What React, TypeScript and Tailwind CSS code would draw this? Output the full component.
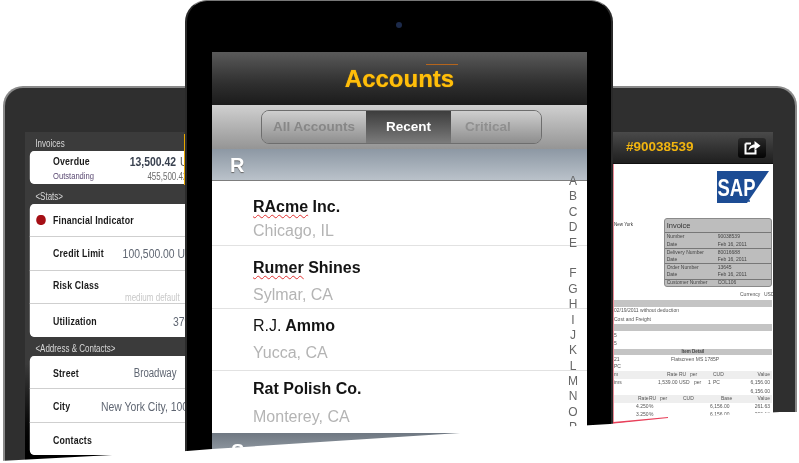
import React from 'react';

const font = "[font-family:'Liberation_Sans',Arial,sans-serif]";

const letters = ['A', 'B', 'C', 'D', 'E', '', 'F', 'G', 'H', 'I', 'J', 'K', 'L', 'M', 'N', 'O', 'P'];

const ShareIcon = () => (
    <svg width="17" height="15" viewBox="0 0 17 15" fill="none">
        <path d="M1.5 3.5H7M11.5 9.5V13.5H1.5V3.5" stroke="#fff" strokeWidth="2" />
        <path d="M4.5 10.5C5 6.5 7.5 4.6 10.5 4.5V1L16.5 5.8L10.5 10V7.5C8 7.5 6 8.5 4.5 10.5Z" fill="#fff" />
    </svg>
);

const SapLogo = () => (
    <svg width="52" height="33" viewBox="0 0 52 33">
        <polygon points="0,0 52,0 30,32 0,32" fill="#1c4c94" />
        <text x="0.5" y="25" fontFamily="Liberation Sans" fontWeight="700" fontSize="24" fill="#fff" textLength="38" lengthAdjust="spacingAndGlyphs">SAP</text>
        <circle cx="32" cy="30" r="1" fill="#1c4c94" />
    </svg>
);

const LeftLabel = ({ children, h }: { children: React.ReactNode; h: string }) => (
    <div className={`${h} pl-[13px] flex items-end text-[10px] leading-[15px] text-[#d8d8d8]`}>{children}</div>
);

const LeftRow = ({ label, value, h, labelW, border = true, pt = 'pt-0', valueClass = 'text-[13px]' }: { label: string; value?: string; h: string; labelW: string; border?: boolean; pt?: string; valueClass?: string }) => (
    <div className={`${h} ${pt} flex items-center whitespace-nowrap ${border ? 'border-b border-[#cfcfcf]' : ''}`}>
        <span className="w-[29px] shrink-0" />
        <span className={`${labelW} shrink-0 text-[11px] font-bold text-[#1a1a1a] tracking-[0.2px]`}>{label}</span>
        {value && <span className={`text-[#5f6672] ${valueClass}`}>{value}</span>}
    </div>
);

// the left tablet is seen at an angle, so its screen is squeezed sideways
const LeftTablet = () => (
    <div className="absolute left-[3px] top-[86px] w-[190px] h-[377px] rounded-tl-[20px] border-l-2 border-t-2 border-[#8a8a8a] bg-[#2f2f2f] pl-[20px] pt-[44px]">
        <div className="w-[160px] h-[331px] overflow-hidden bg-gradient-to-b from-[#3b3b3b] from-70% to-[#000] relative">
            <div className="w-[230px] origin-top-left scale-x-[0.8]">
                <LeftLabel h="h-[19px]">Invoices</LeftLabel>
                <div className="ml-[6px] h-[33px] bg-white rounded-[5px] pt-[3px]">
                    <div className="flex items-center h-[15px] whitespace-nowrap">
                        <span className="w-[29px] shrink-0" />
                        <span className="w-[96px] shrink-0 text-[11px] font-bold text-[#1a1a1a] tracking-[0.2px]">Overdue</span>
                        <span className="text-[13px] font-bold text-[#3a4250]">13,500.42</span>
                        <span className="ml-[5px] text-[13px] text-[#555]">USD</span>
                    </div>
                    <div className="flex items-center h-[14px] whitespace-nowrap">
                        <span className="w-[29px] shrink-0" />
                        <span className="w-[118px] shrink-0 text-[9.5px] text-[#5b4a73]">Outstanding</span>
                        <span className="text-[10px] text-[#6d6d6d]">455,500.42</span>
                    </div>
                </div>
                <LeftLabel h="h-[20px]">&lt;Stats&gt;</LeftLabel>
                <div className="ml-[6px] h-[133px] bg-white rounded-[5px]">
                    <div className="h-[33px] flex items-center border-b border-[#cfcfcf] whitespace-nowrap">
                        <span className="ml-[8px] mr-[9px] w-[12px] h-[10px] rounded-full bg-[#a50f15]" />
                        <span className="text-[11px] font-bold text-[#1a1a1a] tracking-[0.2px]">Financial Indicator</span>
                    </div>
                    <LeftRow label="Credit Limit" value="100,500.00 USD" h="h-[34px]" labelW="w-[87px]" />
                    <div className="h-[33px] border-b border-[#cfcfcf] pl-[29px] pt-[8px] whitespace-nowrap">
                        <div className="text-[11px] leading-[13px] font-bold text-[#1a1a1a] tracking-[0.2px]">Risk Class</div>
                        <div className="ml-[90px] mt-[1px] text-[10px] leading-[10px] text-[#c8c8c8]">medium default</div>
                    </div>
                    <LeftRow label="Utilization" value="37%" h="h-[33px]" labelW="w-[150px]" border={false} pt="pt-[2px]" />
                </div>
                <LeftLabel h="h-[19px]">&lt;Address &amp; Contacts&gt;</LeftLabel>
                <div className="ml-[6px] h-[99px] bg-white rounded-[5px]">
                    <LeftRow label="Street" value="Broadway" h="h-[33px]" labelW="w-[101px]" pt="pt-[2px]" valueClass="text-[12px]" />
                    <LeftRow label="City" value="New York City, 10001" h="h-[34px]" labelW="w-[60px]" pt="pt-[2px]" />
                    <LeftRow label="Contacts" h="h-[32px]" labelW="w-[60px]" border={false} pt="pt-[2px]" />
                </div>
            </div>
            <div className="absolute right-0 top-[2px] w-[1px] h-[51px] bg-[#e8a800]" />
        </div>
    </div>
);

const InvoiceRow = ({ label, value, line }: { label: string; value: string; line?: boolean }) => (
    <div className={`h-[7.6px] flex items-center leading-none ${line ? 'border-t border-[#777]' : ''}`}>
        <span className="w-[53px] pl-[2px]">{label}</span>
        <span>{value}</span>
    </div>
);

const DocRow = ({ cols, bg = '', h = 'h-[8px]' }: { cols: [string, string][]; bg?: string; h?: string }) => (
    <div className={`${h} ${bg} relative text-[5px] leading-none text-[#555] whitespace-nowrap`}>
        {cols.map(([text, pos]) => (
            <span key={text + pos} className={`absolute top-[1px] ${pos}`}>{text}</span>
        ))}
    </div>
);

const RightTablet = () => (
    <div className="absolute left-[590px] top-[86px] w-[207px] h-[377px] rounded-tr-[20px] border-r-2 border-t-2 border-[#8a8a8a] bg-[#2f2f2f] pt-[44px]">
        <div className="ml-[10px] w-[173px] h-[300px] bg-white overflow-hidden">
            <div className="h-[32px] bg-gradient-to-b from-[#4a4a4a] to-[#1f1f1f] flex items-center justify-between pl-[26px] pr-[7px] border-b border-[#111]">
                <span className="text-[13.5px] font-bold text-[#f2b50f]">#90038539</span>
                <span className="w-[28px] h-[20px] rounded-[3px] bg-gradient-to-b from-[#2a2a2a] to-[#050505] flex items-center justify-center">
                    <ShareIcon />
                </span>
            </div>
            <div className="ml-[13px] pr-[1px] border-l border-[#ee8a96]">
                <div className="h-[54px] flex justify-end pt-[7px] pr-[3px]">
                    <SapLogo />
                </div>
                <div className="flex h-[69px]">
                    <span className="text-[4.5px] text-[#333] pt-[4px] w-[50px]">New York</span>
                    <div className="w-[109px] h-[69px] bg-[#bdbdbd] border border-[#8a8a8a] rounded-[3px] text-[5px] text-[#444]">
                        <div className="h-[14px] flex items-center pl-[2px] text-[7.5px] text-[#333] border-b border-[#777]">Invoice</div>
                        <InvoiceRow label="Number" value="90038539" />
                        <InvoiceRow label="Date" value="Feb 16, 2011" />
                        <InvoiceRow label="Delivery Number" value="80016688" line />
                        <InvoiceRow label="Date" value="Feb 16, 2011" />
                        <InvoiceRow label="Order Number" value="13645" line />
                        <InvoiceRow label="Date" value="Feb 16, 2011" />
                        <InvoiceRow label="Customer Number" value="COL106" line />
                    </div>
                </div>
                <DocRow h="h-[13px]" cols={[['Currency', 'left-[126px] top-[5px]'], ['USD', 'left-[150px] top-[5px]']]} />
                <div className="h-[7px] bg-[#c4c4c4]" />
                <DocRow cols={[['02/19/2011 without deduction', 'left-0']]} h="h-[9px]" />
                <DocRow cols={[['Cost and Freight', 'left-0']]} h="h-[8px]" />
                <div className="h-[7px] bg-[#c4c4c4]" />
                <DocRow cols={[['5', 'left-0 top-[2px]']]} h="h-[9px]" />
                <DocRow cols={[['5', 'left-0']]} h="h-[9px]" />
                <div className="h-[6px] bg-[#c4c4c4] flex items-center justify-center text-[4.5px] font-bold text-[#444]">Item Detail</div>
                <DocRow cols={[['21', 'left-0 top-[2px]'], ['Flatscreen MS 1785P', 'left-[57px] top-[2px]']]} />
                <DocRow cols={[['PC', 'left-0']]} />
                <DocRow bg="bg-[#eeeeee]" cols={[['m', 'left-0'], ['Rate', 'left-[53px]'], ['RU', 'left-[65px]'], ['per', 'left-[76px]'], ['CUD', 'left-[99px]'], ['Value', 'right-[2px]']]} />
                <DocRow cols={[['ims', 'left-0'], ['1,539.00', 'left-[44px]'], ['USD', 'left-[65px]'], ['per', 'left-[80px]'], ['1', 'left-[94px]'], ['PC', 'left-[99px]'], ['6,156.00', 'right-[2px]']]} />
                <DocRow cols={[['6,156.00', 'right-[2px] top-[2px]']]} />
                <DocRow bg="bg-[#eeeeee]" cols={[['Rate', 'left-[24px]'], ['RU', 'left-[35px]'], ['per', 'left-[46px]'], ['CUD', 'left-[69px]'], ['Base', 'left-[107px]'], ['Value', 'right-[2px]']]} />
                <DocRow cols={[['4.250', 'left-[22px]'], ['%', 'left-[35px]'], ['6,156.00', 'left-[96px]'], ['261.63', 'right-[2px]']]} />
                <DocRow cols={[['3.250', 'left-[22px]'], ['%', 'left-[35px]'], ['6,156.00', 'left-[96px]'], ['200.13', 'right-[2px]']]} />
                <DocRow cols={[['5.000', 'left-[22px]']]} />
            </div>
        </div>
    </div>
);

const AccountRow = ({ h, name, city, border = true, pt = 'pt-[16px]', gap = 'mt-[4px]' }: { h: string; name: React.ReactNode; city: string; border?: boolean; pt?: string; gap?: string }) => (
    <div className={`${h} pl-[41px] ${pt} ${border ? 'border-b border-[#e2e2e2]' : ''}`}>
        <div className="text-[16px] leading-[20px] font-bold text-[#141414]">{name}</div>
        <div className={`${gap} text-[16px] leading-[20px] text-[#b4b4b4]`}>{city}</div>
    </div>
);

const Wavy = ({ children }: { children: React.ReactNode }) => (
    <span className="underline decoration-wavy decoration-[#e0302f] decoration-1 underline-offset-2">{children}</span>
);

const CenterTablet = () => (
    <div className="absolute left-[185px] top-0 w-[428px] h-[463px] rounded-t-[22px] border-t border-x-2 border-t-[#777] border-x-[#2a2a2a] bg-[#000] pl-[25px] pr-[24px]">
        <div className="h-[51px] flex items-center justify-center">
            <span className="w-[6px] h-[6px] rounded-full bg-[#1c2a4a] mr-[1px] mb-[3px]" />
        </div>
        <div className="h-[412px] overflow-hidden bg-white">
            <div className="h-[53px] bg-gradient-to-b from-[#5a5a5a] via-[#2f2f2f] via-60% to-[#1b1b1b] flex items-center justify-center relative">
                <span className="text-[24px] font-bold text-[#ffbe0a] mt-[1px] [text-shadow:0_0_1px_#d99a00]">Accounts</span>
                <span className="absolute left-[214px] top-[12px] w-[32px] h-[1px] bg-[#b5651d]" />
            </div>
            <div className="h-[44px] bg-gradient-to-b from-[#d0d0d0] to-[#959595] pl-[49px] pt-[5px]">
                <div className="w-[281px] h-[34px] flex rounded-[8px] border border-[#6e6e6e] overflow-hidden text-[13.5px] font-bold">
                    <span className="w-[104px] flex items-center justify-center text-[#878787] bg-gradient-to-b from-[#cfcfcf] to-[#8e8e8e]">All Accounts</span>
                    <span className="w-[85px] flex items-center justify-center text-white bg-gradient-to-b from-[#3d3d3d] to-[#7b7b7b]">Recent</span>
                    <span className="flex-1 flex items-center pl-[14px] text-[#8f8f8f] bg-gradient-to-b from-[#cfcfcf] to-[#8e8e8e]">Critical</span>
                </div>
            </div>
            <div className="h-[32px] bg-gradient-to-b from-[#8d98a4] to-[#bac2ca] border-b border-[#7d7d7d] pl-[18px] flex items-center text-[20px] font-bold text-white [text-shadow:0_1px_1px_#666]">R</div>
            <div className="relative">
                <AccountRow h="h-[65px]" name={<><Wavy>RAcme</Wavy> Inc.</>} city="Chicago, IL" />
                <AccountRow h="h-[63px]" name={<><Wavy>Rumer</Wavy> Shines</>} city="Sylmar, CA" pt="pt-[12px]" gap="mt-[7px]" />
                <AccountRow h="h-[62px]" name={<><span className="font-normal">R.J.</span> Ammo</>} city="Yucca, CA" pt="pt-[7px]" gap="mt-[7px]" />
                <AccountRow h="h-[62px]" name="Rat Polish Co." city="Monterey, CA" border={false} pt="pt-[8px]" gap="mt-[8px]" />
                <div className="absolute left-[354px] top-[-7px] w-[14px] text-center text-[12px] leading-[15.4px] text-[#666]">
                    {letters.map((l, i) => (
                        <div key={i} className="h-[15.4px]">{l}</div>
                    ))}
                </div>
            </div>
            <div className="h-[32px] bg-gradient-to-b from-[#6f7882] to-[#a8b0b8] pl-[19px] pt-[3px] text-[20px] font-bold text-white">S</div>
        </div>
    </div>
);

export default function App() {
    return (
        <div className={`relative w-[799px] h-[463px] overflow-hidden bg-white ${font}`}>
            <div className="absolute inset-0 blur-[0.3px]">
                <LeftTablet />
                <RightTablet />
                <CenterTablet />
            </div>
            {/* white wedge the mock-up fades into along the bottom */}
            <div className="absolute inset-0 bg-[#e8405a] [clip-path:polygon(613px_422px,668px_417px,668px_419px,613px_424px)]" />
            <div className="absolute inset-0 bg-white [clip-path:polygon(0_463px,0_461px,187px_451px,212px_449px,460px_433px,610px_424px,668px_418px,780px_412px,799px_412px,799px_463px)]" />
        </div>
    );
}
